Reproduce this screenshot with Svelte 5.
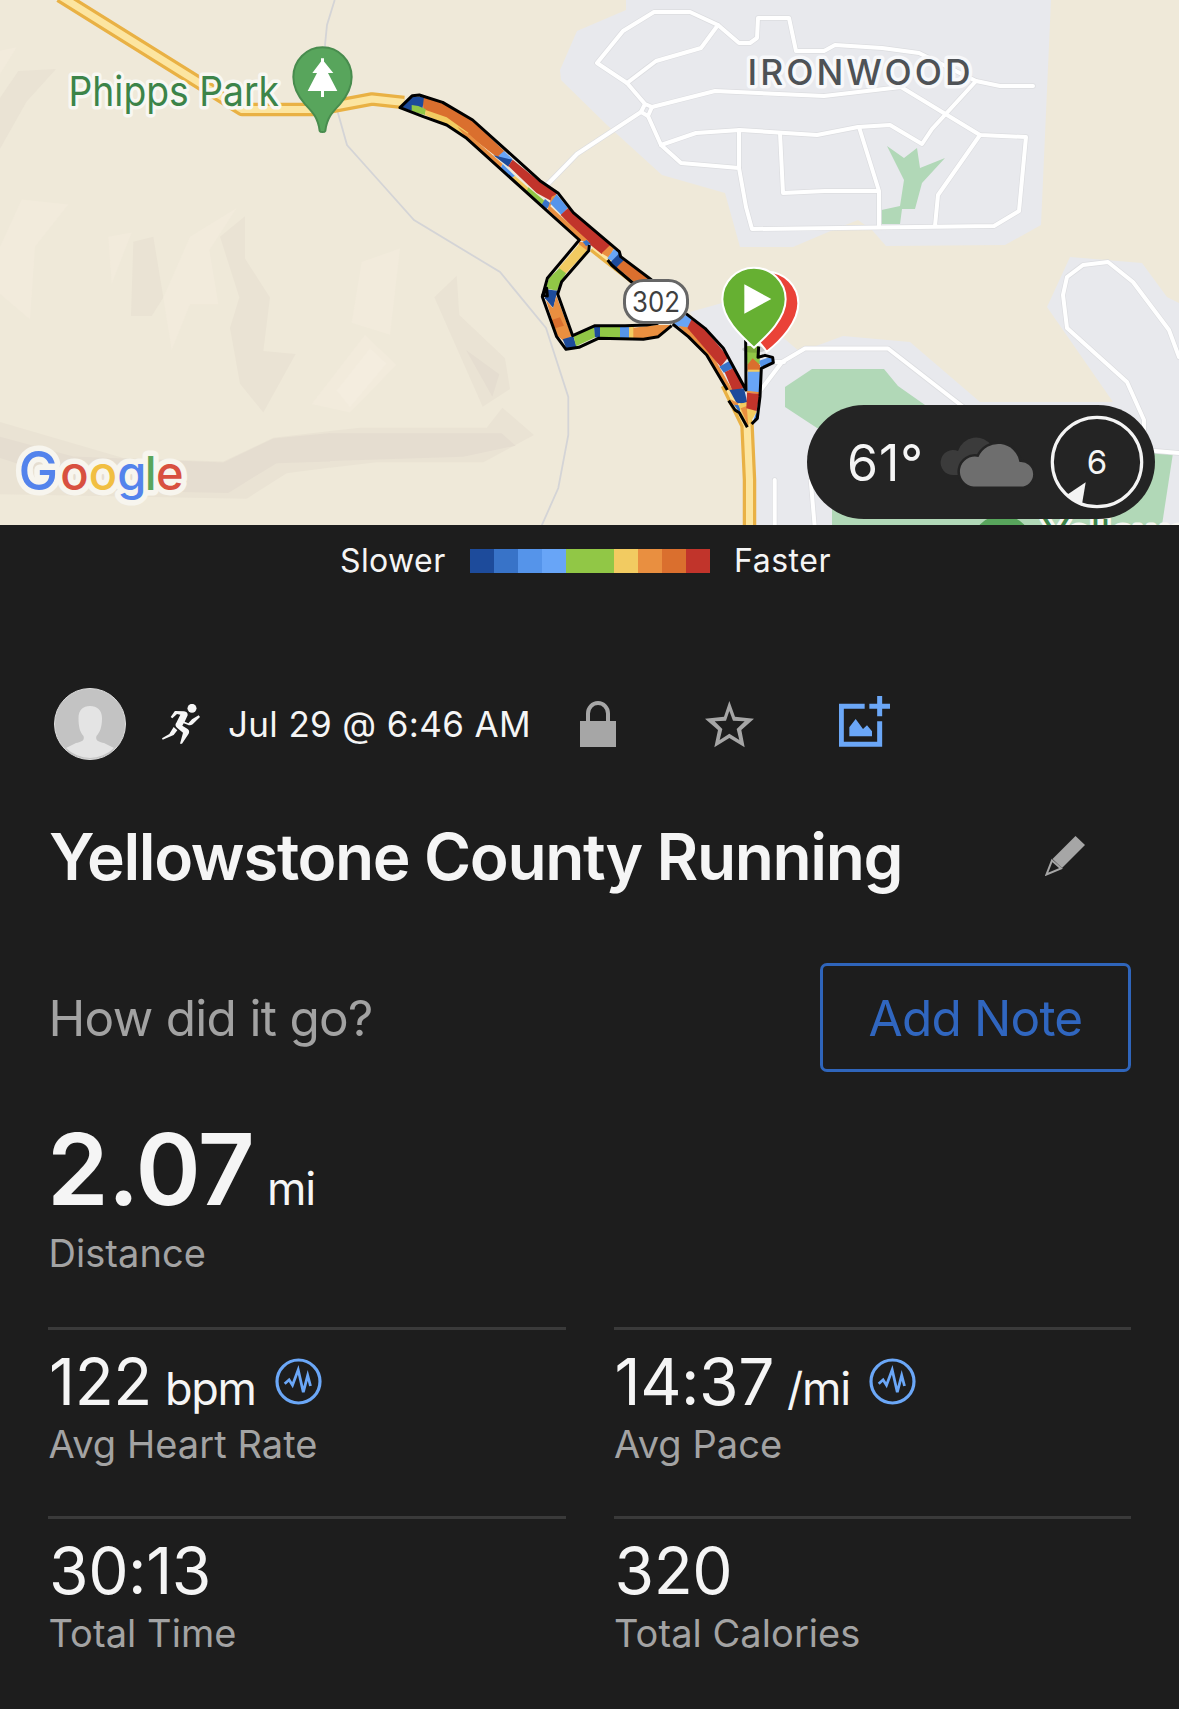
<script>
  const legend = ['#1d4b9b', '#3873c8', '#5594ea', '#68a5f7', '#91c746', '#91c746', '#f2cb61', '#e98f40', '#da6f2e', '#c1342b'];

  const stats = [
    { value: '122', unit: 'bpm', label: 'Avg Heart Rate', chart: true },
    { value: '14:37', unit: '/mi', label: 'Avg Pace', chart: true },
    { value: '30:13', unit: '', label: 'Total Time', chart: false },
    { value: '320', unit: '', label: 'Total Calories', chart: false }
  ];

  const C = { n: '#1d4b9b', b: '#3873c8', m: '#5594ea', l: '#68a5f7', g: '#91c746', y: '#f2cb61', o: '#e98f40', d: '#da6f2e', r: '#c1342b' };

  // Pace-coloured pieces of the track, northern part
  const north = [
    [C.d, '128,112 188,128 278,182 375,275 355,295 265,225 200,175 130,152'],
    [C.n, '62,143 95,108 132,112 127,150 98,153'],
    [C.g, '95,135 115,138 138,148 135,165 95,154'],
    [C.y, '137,150 200,172 265,218 262,237 200,194 135,165'],
    [C.o, '232,200 270,225 368,312 360,325 262,237'],
    [C.l, '372,273 398,298 385,310 355,288'],
    [C.n, '340,286 397,299 385,320'],
    [C.r, '398,299 480,366 532,400 513,422 470,399 385,318'],
    [C.m, '368,312 405,348 395,354 362,325'],
    [C.y, '405,348 450,388 440,394 395,354'],
    [C.g, '445,382 497,425 487,434 440,394'],
    [C.b, '495,417 514,432 500,447 485,434'],
    [C.o, '515,410 530,402 520,420 508,445 503,448'],
    [C.m, '530,403 563,443 545,466 510,430'],
    [C.r, '564,444 692,555 665,582 625,550 542,465'],
    [C.o, '510,438 540,466 628,545 600,542 503,448'],
    [C.o, '598,545 625,548 620,575 595,562'],
    [C.b, '608,545 620,540 632,552 618,558'],
    [C.o, '690,556 702,566 685,592 665,580'],
    [C.l, '702,567 720,580 702,606 682,595'],
    [C.n, '718,580 734,600 712,624 690,608'],
    [C.d, '732,600 812,660 770,672 710,622'],
    [C.y, '597,553 622,572 556,642 535,625'],
    [C.g, '538,625 558,640 530,692 497,685 507,655'],
    [C.n, '498,688 532,692 520,745 495,715'],
    [C.o, '498,720 519,745 529,708 575,828 550,842 530,825'],
    [C.d, '515,780 540,772 552,797 525,805'],
    [C.n, '548,838 580,828 590,860 560,868'],
    [C.g, '580,826 642,801 646,832 588,859'],
    [C.n, '642,801 660,801 660,834 645,832'],
    [C.g, '660,799 722,799 722,834 660,834'],
    [C.m, '720,799 748,799 748,834 720,834'],
    [C.y, '747,800 762,800 762,834 747,834'],
    [C.o, '760,803 830,795 872,795 835,830 790,837 760,835']
  ];

  // Southern part, down to the trailhead
  const south = [
    [C.l, '220,252 262,222 278,240 262,264 245,264'],
    [C.o, '236,258 262,262 335,340 400,455 380,448 320,345'],
    [C.r, '275,238 315,268 385,352 362,380 262,264'],
    [C.b, '358,380 388,363 400,384 372,398'],
    [C.r, '374,397 400,384 434,442 400,458'],
    [C.n, '388,450 432,445 442,488 410,490'],
    [C.o, '392,478 415,490 412,502 398,492'],
    [C.b, '402,494 420,496 420,520'],
    [C.y, '415,495 440,486 470,515 450,550 442,562'],
    [C.o, '422,505 440,498 445,558'],
    [C.g, '439,318 478,318 480,372 442,375'],
    [C.d, '442,375 458,355 480,375 480,392 442,392'],
    [C.y, '443,389 480,389 480,396 443,396'],
    [C.l, '444,395 481,395 481,458 442,454'],
    [C.o, '440,452 480,457 478,463 440,458'],
    [C.r, '441,458 479,462 470,513 439,505'],
    [C.m, '478,362 512,350 520,366 482,382'],
    [C.b, '468,520 476,522 470,540 458,548']
  ];

  const roads = [
    'M1033 86H1000L976 81L919 53L882 48L835 45L824 51H796L789 18H758L757 38L750 43H739L718 25L690 12H654L623 31L597 63L627 83L645 104L652 107L648 116L641 112L645 104',
    'M718 25L701 48L656 61L627 83',
    'M652 107L715 91L824 96L901 87L980 135L1026 137L1019 211L994 226L752 229L746 207L739 168L681 163L661 145L648 116',
    'M661 145L696 133L740 130L817 135L858 127L890 125L922 144L932 129L976 81',
    'M739 130V168M780 133L783 193L825 191H879M859 127L879 191V226M980 135L938 195L935 226',
    'M641 112L577 154L545 187',
    'M757 395L782 362L805 348.5H888L980 420M770 362H784',
    'M1179 357L1169 330L1133 282L1108 262L1083 265L1067 277L1063 295L1067 328L1127 382L1144 420V450L1179 453',
    'M774.7 480V530M810.7 480L815 530'
  ];

  const highways = [
    'M60 -4L242 109.500H316L372 99L404 102.500',
    'M594 246L640 282',
    'M727 384L747 425L749.500 480V530'
  ];
</script>

<main class="screen">
  <section class="map">
    <svg class="canvas" viewBox="0 0 1179 525" width="1179" height="525">
      <rect width="1179" height="525" fill="#efe9d9" />
      <g transform="scale(.33333 .33806)">
        <g fill="#eae3d4">
          <path d="M0 290L55 210L168 204L80 300L0 440Z" />
          <path d="M400 715L460 700L490 880L455 935H393Z" />
          <path d="M735 640L660 700L718 880L690 970L720 1135L790 1220L887 1047L790 1038L810 880L735 765Z" />
          <path d="M0 1248L370 1355L670 1365L820 1295L992 1275V1383L860 1400L740 1475L0 1462Z" />
        </g>
        <path d="M0 1292L220 1350L670 1368L820 1297L992 1281V1365L830 1370L685 1458L300 1450L0 1355Z" fill="#e5ddd0" />
        <g fill="#f2ebdc">
          <path d="M0 150L50 140L0 220ZM65 590L205 605L105 730L90 945L0 870V730Z" />
          <path d="M325 700L395 688L335 840ZM710 615L570 700L490 880L515 1035L570 900H655L628 740Z" />
          <path d="M1085 775L1200 735L1170 990L1055 955ZM1095 990L1190 1080L1050 1220L935 1195Z" />
        </g>
        <path d="M1110 1030L1160 1075L1050 1205L1010 1155Z" fill="#f4eddf" />
      </g>
      <g transform="translate(330 225) scale(.33333)">
        <path d="M380 152L388 270L525 400L540 492L458 545L313 217ZM0 618L90 608H470L517 548L612 630L460 712H140L0 728Z" fill="#eae3d4" />
        <path d="M408 375L508 448L487 515ZM0 625H515L557 662L400 695L0 708Z" fill="#e5ddd0" />
      </g>

      <g fill="#e8e9ed">
        <path d="M626 0V10L577 31L560 70L561 80L607 125L662 175L725 193L740 247L793 247L833 230L858 220L872 230L886 246L1005 245L1041 225L1051 0Z" />
        <path d="M690 312L722 303L765 322L800 352L843 336L910 342L980 402H1113L1047 307L1070 257L1142 263L1167 297L1179 303V525H750L745 420Z" />
      </g>
      <g fill="#b1d8b7">
        <path d="M887 146L904 158L917 148L920 168L945 158L922 183L915 209H902L900 224H881.5V210L900 206L904 180Z" />
        <path d="M812 369H884L898 386L935 412V440L817 428L785 407V387Z" />
        <path d="M832 490V525H1162L1173 453L1140 448Z" />
      </g>

      <path d="M334.700 0L327 25L325 45L338 113L347 145L380 182L414 220L500 272L546 328L568.300 397V435L558.300 488L541.500 526" fill="none" stroke="#d4d4d6" stroke-width="1.800" />

      <g fill="none" stroke-linejoin="round" stroke-linecap="round">
        {#each roads as d}<path {d} stroke="#dcdde0" stroke-width="5.400" />{/each}
        {#each roads as d}<path {d} stroke="#fff" stroke-width="4" />{/each}
      </g>
      <g fill="none" stroke-linejoin="round">
        {#each highways as d}<path class="hw-edge" {d} />{/each}
        {#each highways as d}<path class="hw-fill" {d} />{/each}
      </g>

      <g transform="translate(380 60) scale(.33333)">
        {#each north as [fill, points]}<polygon {points} {fill} />{/each}
        <g class="outline">
          <path d="M815 660L722 590L718 575L580 458L535 400L480 362L278 180L188 127L118 105L97 107L60 143L130 170L200 195L260 235L598 540L502 655L487 710L530 830L558 868L597 862L655 835L790 838L835 830L875 797" />
          <path d="M628 555L626 572L545 665L533 702L578 827L645 797L735 797L800 795L835 790" />
          <path d="M683 600L695 615L762 672" />
          <path d="M500 685L488 706L502 708Z" />
        </g>
      </g>
      <g transform="translate(600 240) scale(.33333)">
        {#each south as [fill, points]}<polygon {points} {fill} />{/each}
        <g class="outline">
          <path d="M258 221L315 265L370 325L438 450L437 300" />
          <path d="M218 252L265 290L320 345L382 450M386 482L405 510L418 518L442 562" />
          <path d="M455 552L472 535L480 470L484 385L520 368L518 352L495 346L474 352L476 320" />
        </g>
        <ellipse cx="462" cy="328" rx="36" ry="10" fill="#000" opacity=".15" />
      </g>

      <rect x="624.500" y="280.500" width="63" height="42" rx="19" fill="#fff" stroke="#666" stroke-width="3" />
      <text class="shield" x="632" y="312" textLength="48" lengthAdjust="spacingAndGlyphs">302</text>

      <g transform="translate(600 240) scale(.33333)" stroke="#fff" stroke-width="6">
        <path d="M500 335C478 297 405 252 405 190A95 95 0 0 1 595 190C595 245 545 300 500 335Z" fill="#ea4238" />
        <path d="M462 323C420 285 367 235 367 178A95 95 0 0 1 557 178C557 235 504 285 462 323Z" fill="#66b032" />
        <path d="M433 133L514 177L433 221Z" fill="#fff" stroke="none" />
      </g>

      <text class="label park" x="68.500" y="106" textLength="210.500" lengthAdjust="spacingAndGlyphs">Phipps Park</text>
      <text class="label town" x="747.500" y="85" textLength="226" lengthAdjust="spacingAndGlyphs">IRONWOOD</text>
      <g transform="scale(.33333 .33806)">
        <path d="M959 387C954 348 938 332 915 308C890 280 880 255 880 228A87.500 88 0 0 1 1055 228C1055 255 1045 280 1020 308C997 332 981 348 976 387C974 392 961 392 959 387Z" fill="#58a55c" stroke="#488c4e" stroke-width="6" />
        <path d="M963 172H972V182L1000 216H984L1012 269H972V287H963V269H923L951 216H937L963 182Z" fill="#fff" />
      </g>

      <circle cx="1002" cy="545" r="30" fill="#58a55c" />
      <text class="label park" x="1042" y="549">Yellowstone</text>

      <g class="logo">
        <g class="halo"><text y="489.500"><tspan class="cap" x="18.500">G</tspan><tspan x="60.300">o</tspan><tspan x="88.800">o</tspan><tspan x="117.300">g</tspan><tspan x="144.800">l</tspan><tspan x="156">e</tspan></text></g>
        <text y="489.500"><tspan class="cap" x="18.500" fill="#5383ec">G</tspan><tspan x="60.300" fill="#d85040">o</tspan><tspan x="88.800" fill="#f1bf42">o</tspan><tspan x="117.300" fill="#5383ec">g</tspan><tspan x="144.800" fill="#58a55c">l</tspan><tspan x="156" fill="#d85040">e</tspan></text>
      </g>
    </svg>

    <div class="weather">
      <span class="temp">61°</span>
      <svg class="clouds" viewBox="0 0 96 54" width="96" height="54">
        <path d="M13.500 40A12.500 12.500 0 1 1 18 16A19 19 0 0 1 52 11V40Z" fill="#3b3b3b" />
        <path d="M33.500 51.500A15 15 0 1 1 38.500 22A21.500 21.500 0 0 1 79.500 27A12.300 12.300 0 1 1 80 51.500Z" fill="#6e6e6e" stroke="#242424" stroke-width="5" paint-order="stroke" />
      </svg>
      <div class="wind">
        <svg viewBox="0 0 94 94" width="94" height="94">
          <circle cx="47" cy="47" r="44.700" fill="none" stroke="#f4f4f4" stroke-width="3.200" />
          <path d="M35.700 67.300L16.700 80L31.700 91Z" fill="#f4f4f4" />
        </svg>
        <span>6</span>
      </div>
    </div>
  </section>

  <div class="legend">
    <span class="slower">Slower</span>
    <div class="scale">
      {#each legend as color}<i style:background={color}></i>{/each}
    </div>
    <span class="faster">Faster</span>
  </div>

  <div class="meta">
    <svg class="avatar" viewBox="0 0 72 72" width="72" height="72">
      <circle cx="36" cy="36" r="35.500" fill="#c3c3c3" stroke="#dedede" />
      <path d="M36 18C43 18 48 22 48 30C48 39 46 44 42.500 48C41 53 45 53.500 50 55L60 60A34 34 0 0 1 12 60L22 55C27 53.500 31 53 29.500 48C26 44 24.500 39 24.500 30C24.500 22 29 18 36 18Z" fill="#e4e4e4" />
    </svg>
    <svg class="runner" viewBox="396 102 114 120" width="38" height="40">
      <g fill="#f6f6f6">
        <circle cx="486" cy="115" r="13.500" />
        <path d="M436 123L462 124Q474 126 473 136L464 155L475 160L486 148L506 136L510 141L488 163Q480 168 473 164L461 160L457 167L473 177Q480 182 476 191L456 221H450L459 188L441 173Q433 166 439 158L451 134L441 132L427 145L422 141L431 128Q433 124 436 123Z" />
        <path d="M431 171L442 181L431 195L398 209L396 205L418 192Z" />
      </g>
    </svg>
    <span class="date">Jul 29 @ 6:46 AM</span>
    <svg class="lock" viewBox="0 0 36 46" width="36" height="46">
      <path d="M8 22V12.500A10 10.500 0 0 1 28 12.500V22" fill="none" stroke="#a6a6a6" stroke-width="4" />
      <rect y="20" width="36" height="26" fill="#a6a6a6" />
    </svg>
    <svg class="star" viewBox="497 94 147 141" width="49" height="47">
      <path fill-rule="evenodd" d="M570 94L587 141L644 147L606 181L616 233L570 205L525 233L536 181L497 147L554 141ZM570 124L560 153L526 155L549 178L541 211L570 192L600 211L592 178L616 155L581 153Z" fill="#a6a6a6" />
    </svg>
    <svg class="photo" viewBox="897 78 153 153" width="51" height="51">
      <path d="M974 109H904V223H1019V154" fill="none" stroke="#6ba7f7" stroke-width="15" />
      <path d="M988 109H1050M1019 78V139" fill="none" stroke="#6ba7f7" stroke-width="15" />
      <path d="M928 199V172L947 147L969 177L981 166L996 184V199Z" fill="#6ba7f7" />
    </svg>
  </div>

  <div class="title-row">
    <h1>Yellowstone County Running</h1>
    <svg viewBox="0 0 40 40" width="40" height="40">
      <path d="M30.500 0L40 9L17 32L7.500 23Z" fill="#a6a6a6" />
      <path d="M7 24.500L16 32.500L1.500 38.500Z" fill="none" stroke="#a6a6a6" stroke-width="2" />
    </svg>
  </div>

  <div class="note">
    <span>How did it go?</span>
    <button>Add Note</button>
  </div>

  <div class="distance">
    <div class="value"><strong>2.07</strong><span class="unit">mi</span></div>
    <div class="caption">Distance</div>
  </div>

  <div class="stats">
    {#each stats as s}
      <div class="stat">
        <div class="value">
          <span class="num">{s.value}</span>
          {#if s.unit}<span class="unit">{s.unit}</span>{/if}
          {#if s.chart}
            <svg class="pulse" viewBox="0 0 47 47" width="47" height="47">
              <circle cx="23.500" cy="23.500" r="21.500" fill="none" stroke="#6ba7f7" stroke-width="3.200" />
              <path d="M9.700 25.800L14.100 21.800L17.500 27.200L23.200 11.800L28.300 34.200L32.700 17.500L35.500 28" fill="none" stroke="#6ba7f7" stroke-width="2.800" />
            </svg>
          {/if}
        </div>
        <div class="caption">{s.label}</div>
      </div>
    {/each}
  </div>
</main>

<style>
  :global(body) { background: #1d1d1d; }
  .screen {
    width: 1179px;
    height: 1709px;
    overflow: hidden;
    background: #1d1d1d;
    color: #f5f5f5;
    font-family: Inter, "Liberation Sans", sans-serif;
    white-space: nowrap;
  }
  svg { display: block; flex: none; }
  .map { position: relative; height: 525px; overflow: hidden; }
  .hw-edge { stroke: #e9b144; stroke-width: 13.5; }
  .hw-fill { stroke: #fce5a0; stroke-width: 7; }
  .outline { fill: none; stroke: #000; stroke-width: 9; stroke-linejoin: round; }
  .shield { font: 400 28px Inter, sans-serif; fill: #3f3f3f; }
  .label { font-family: Inter, sans-serif; paint-order: stroke; stroke-linejoin: round; stroke: #f8f7f2; stroke-width: 7px; }
  .park { font-size: 41px; fill: #3c8449; }
  .town { font-size: 35px; font-weight: 500; letter-spacing: 3px; fill: #4e5256; stroke: #f7f8fa; }
  .logo { font: 500 47px Inter, sans-serif; }
  .cap { font-size: 53px; }
  .halo { fill: #f7f5ee; stroke: #f7f5ee; stroke-width: 11px; stroke-linejoin: round; }

  .weather {
    position: absolute;
    right: 24px;
    top: 405px;
    width: 348px;
    height: 114px;
    box-sizing: border-box;
    padding: 0 10px 0 40px;
    border-radius: 57px;
    background: #242424;
    display: flex;
    align-items: center;
  }
  .temp { width: 93px; font-size: 50px; line-height: 60px; padding-top: 2px; letter-spacing: 1px; }
  .clouds { margin-right: 14px; }
  .wind { display: grid; place-items: center; }
  .wind > * { grid-area: 1 / 1; }
  .wind span { font-size: 33px; }

  .legend { height: 72px; display: flex; align-items: center; font-size: 32px; letter-spacing: 0.55px; }
  .slower { box-sizing: border-box; width: 470px; padding-left: 340px; letter-spacing: 0.4px; }
  .scale { width: 240px; height: 24px; display: grid; grid-template-columns: repeat(10, 1fr); }
  .faster { padding-left: 24px; }
  .slower, .faster { margin-bottom: 1px; }

  .meta { margin-top: 91px; padding-left: 54px; height: 72px; display: flex; align-items: center; }
  .runner { margin-left: 36px; }
  .date { width: 352px; margin-left: 28px; font-size: 35px; letter-spacing: 0.35px; }
  .star { margin-left: 89px; }
  .photo { margin: 0 0 5px 85px; }

  .title-row { margin-top: 56px; height: 80px; padding: 0 94px 0 49px; display: flex; align-items: center; justify-content: space-between; }
  h1 { margin: 0; font-size: 64px; font-weight: 600; letter-spacing: -1.38px; }

  .note { margin-top: 67px; height: 109px; padding: 0 48px 0 48.5px; display: flex; align-items: center; justify-content: space-between; font-size: 49.5px; letter-spacing: -0.7px; color: #a2a2a2; }
  button {
    width: 311px;
    height: 109px;
    padding: 0;
    border: 3px solid #2f65bb;
    border-radius: 7px;
    background: none;
    color: #3066bf;
    font: inherit;
    letter-spacing: -0.8px;
  }

  .value { display: flex; align-items: baseline; }
  .unit { font-size: 45px; line-height: 45px; letter-spacing: -1.2px; }
  .caption { padding-left: 0.5px; color: #a3a3a3; font-size: 38px; line-height: 40px; letter-spacing: 0.06px; }
  .distance { margin-top: 47px; padding-left: 48px; height: 208px; }
  .distance strong { font-size: 99px; font-weight: 600; line-height: 100px; margin: 0 13px 0 -1px; letter-spacing: -1px; }
  .distance .caption { margin-top: 14px; }

  .stats { padding: 0 48px; display: grid; grid-template-columns: 1fr 1fr; column-gap: 48px; }
  .stat { box-sizing: border-box; height: 189px; padding-top: 20px; border-top: 3px solid #3a3a3a; }
  .num { padding-left: 1px; font-size: 64px; line-height: 64px; letter-spacing: -0.4px; }
  .stat .unit { margin-left: 13px; }
  .stat .caption { margin-top: 10px; }
  .pulse { align-self: center; margin: 0 0 2px 19px; }
</style>
